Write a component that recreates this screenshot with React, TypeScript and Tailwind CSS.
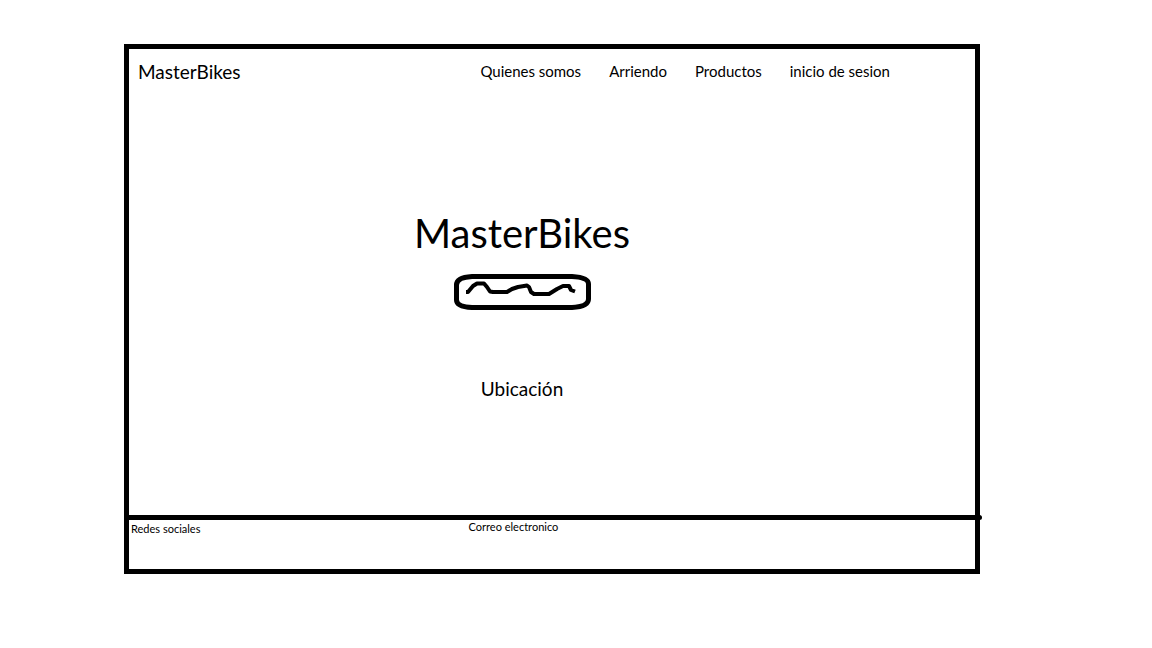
const links = [
  { label: "Quienes somos", href: "#quienes-somos" },
  { label: "Arriendo", href: "#arriendo" },
  { label: "Productos", href: "#productos" },
  { label: "inicio de sesion", href: "#sesion" },
];

function Header() {
  return (
    <header className="flex items-start justify-between pt-[11px] pl-[9px] pr-[85px]">
      <a href="#inicio" className="text-[19px] leading-6">
        MasterBikes
      </a>
      <nav aria-label="Principal">
        <ul className="flex gap-7 text-[15px] leading-[22px]">
          {links.map((link) => (
            <li key={link.href}>
              <a href={link.href}>{link.label}</a>
            </li>
          ))}
        </ul>
      </nav>
    </header>
  );
}

function Hero() {
  return (
    <section id="inicio" className="flex flex-col items-center pt-[125px] pr-[60px] pb-[114px]">
      <h1 className="text-[40px] leading-[48px]">MasterBikes</h1>
      <button type="button" aria-label="Ver más" className="mt-[17px] block">
        <svg
          width="137"
          height="36"
          viewBox="0 0 137 36"
          fill="none"
          stroke="#000"
          strokeLinejoin="round"
          className="block"
        >
          <path
            strokeWidth="5"
            d="M18 2.5H118C127 3 134.5 5 134.5 10V25C134.5 31 128 33 118 33.5H18C8 33 2.5 31 2.5 26V11C2.5 5 9 3 18 2.5Z"
          />
          <path
            strokeWidth="4"
            d="M12 18H14L19 12L23 9.5H30L33 13L36 17.5L39 18H53L58 15L64 13L73 11.5L75 13L77 18L80 20H95L103 15L109 12H115L117 16L121 17.5"
          />
        </svg>
      </button>
      <h2 className="mt-[67px] text-[19px] leading-6">Ubicación</h2>
    </section>
  );
}

function Footer() {
  return (
    <footer className="relative grid min-h-[54px] grid-cols-[2fr_3fr] border-t-[5px] border-black pl-[2px] text-[11px] leading-[14px]">
      <span className="absolute -top-[5px] -right-[7px] h-[5px] w-[5px] rounded-full bg-black" />
      <a href="#redes" className="justify-self-start pt-[2px]">
        Redes sociales
      </a>
      <a href="#correo" className="justify-self-start">
        Correo electronico
      </a>
    </footer>
  );
}

export default function App() {
  return (
    <div className="min-h-screen bg-white pt-11 pr-[172px] pl-[124px] font-['Lato','Noto_Sans',sans-serif] text-black">
      <div className="border-[5px] border-black">
        <Header />
        <main>
          <Hero />
        </main>
        <Footer />
      </div>
    </div>
  );
}
